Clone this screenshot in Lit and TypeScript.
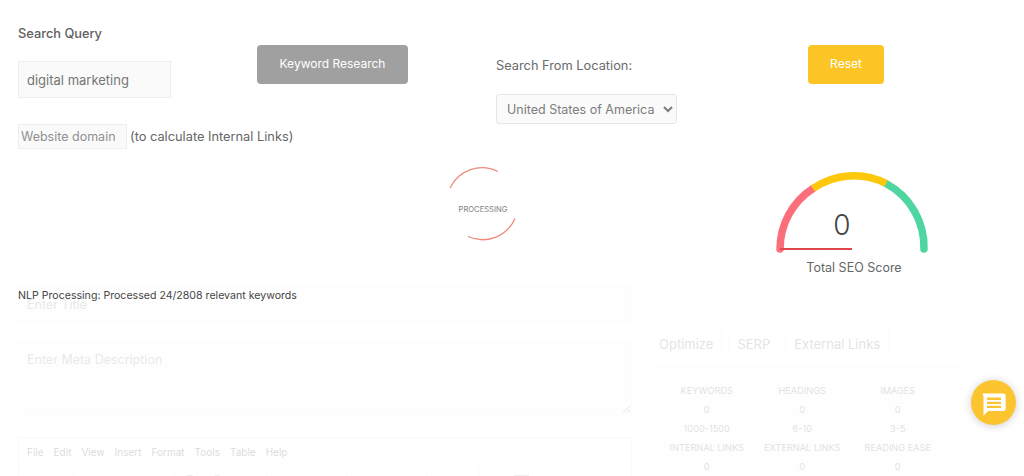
import { LitElement, html, css, svg } from 'lit';
import { customElement, property } from 'lit/decorators.js';

const MENU = ['File', 'Edit', 'View', 'Insert', 'Format', 'Tools', 'Table', 'Help'];

const STATS = [
  { label: 'KEYWORDS', value: '0', range: '1000-1500' },
  { label: 'HEADINGS', value: '0', range: '6-10' },
  { label: 'IMAGES', value: '0', range: '3-5' },
  { label: 'INTERNAL LINKS', value: '0', range: '' },
  { label: 'EXTERNAL LINKS', value: '0', range: '' },
  { label: 'READING EASE', value: '0', range: '' },
];

// only the top couple of pixels of the toolbar icons are on screen
const ICONS = {
  back: svg`<path d="M9 1L5 5" />`,
  forward: svg`<path d="M6 1l4 4" />`,
  bold: svg`<path d="M4 1h5a3 3 0 0 1 3 3" />`,
  italic: svg`<path d="M7 1h5" />`,
  underline: svg`<path d="M4 1v5M11 1v5" />`,
  lines: svg`<path d="M1 1.500h14M1 5.500h14" />`,
  list: svg`<path d="M5 1.500h10M1 1.500h2M5 5.500h10" />`,
  link: svg`<path d="M4 6a4 4 0 0 1 8 0" />`,
  image: svg`<path d="M1 6V1h14v5" />`,
  plus: svg`<path d="M8 1v6" />`,
};

const TOOL_GROUPS = [
  { cls: 'g-undo', icons: [ICONS.back, ICONS.forward] },
  { cls: 'g-format', icons: [] },
  { cls: 'g-text', icons: [ICONS.bold, ICONS.italic, ICONS.underline] },
  { cls: 'g-align', icons: [ICONS.lines, ICONS.lines, ICONS.lines] },
  { cls: 'g-list', icons: [ICONS.list, ICONS.list] },
  { cls: 'g-indent', icons: [ICONS.lines, ICONS.lines] },
  { cls: 'g-insert', icons: [ICONS.link, ICONS.image, ICONS.plus] },
];

@customElement('seo-gauge')
export class SeoGauge extends LitElement {
  @property({ type: Number }) score = 0;

  static styles = css`
    :host {
      display: block;
      width: 160px;
    }

    svg {
      display: block;
    }

    .caption {
      text-align: center;
      font-size: 12.500px;
      line-height: 16px;
      color: #666;
      padding-left: 4px;
    }
  `;

  render() {
    return html`
      <svg width="160" height="90" viewBox="0 0 160 90" fill="none">
        <path d="M8 79A72 72 0 0 1 41 18.500" stroke="#fb6f7a" stroke-width="7.500" stroke-linecap="round" />
        <path d="M114 13.500A72 72 0 0 1 152 79" stroke="#4fd6a0" stroke-width="7.500" stroke-linecap="round" />
        <path d="M41 18.500A72 72 0 0 1 114 13.500" stroke="#fdc70c" stroke-width="7.500" />
        <path d="M8 79H80" stroke="#e2474c" stroke-width="2" />
        <text x="70" y="65" text-anchor="middle" font-size="28" font-weight="300" fill="#444">${this.score}</text>
      </svg>
      <div class="caption">Total SEO Score</div>
    `;
  }
}

@customElement('app-root')
export class AppRoot extends LitElement {
  static styles = css`
    :host {
      display: block;
      position: relative;
      height: 476px;
      overflow: hidden;
      background: #fff;
      font-family: 'Inter', 'Noto Sans', sans-serif;
      color: #666;
    }

    .page {
      padding: 0 18px;
    }

    .top {
      display: grid;
      grid-template-columns: 239px 239px 312px auto;
      height: 160px;
    }

    .query-col {
      padding-top: 26px;
    }

    .button-col {
      padding-top: 45px;
    }

    .location-col {
      padding-top: 57px;
    }

    .field-label {
      font-size: 12.800px;
      line-height: 15px;
      font-weight: 500;
      color: #5e5e5e;
    }

    .location-label {
      font-size: 12.800px;
      line-height: 16px;
      padding-top: 1px;
      color: #6a6a6a;
    }

    input,
    select,
    textarea {
      box-sizing: border-box;
      font-family: inherit;
      outline: none;
    }

    .query-input {
      display: block;
      width: 153px;
      height: 37px;
      margin-top: 20px;
      padding: 0 8px;
      font-size: 13px;
      color: #757575;
      background: #fafafa;
      border: 1px solid #eee;
    }

    .domain-row {
      display: flex;
      align-items: center;
      gap: 3px;
      margin-top: 26px;
      font-size: 12.800px;
      white-space: nowrap;
      color: #666;
    }

    .domain-input {
      width: 109px;
      height: 25px;
      padding: 0 2px;
      font-size: 12.500px;
      background: #fafafa;
      border: 1px solid #eee;
    }

    .domain-input::placeholder {
      color: #8f8f8f;
    }

    .btn {
      display: block;
      height: 39px;
      padding: 0 0 2px;
      border: none;
      border-radius: 4px;
      font-family: inherit;
      font-size: 12px;
      color: #fff;
    }

    .btn-gray {
      width: 151px;
      background: #a0a0a0;
    }

    .btn-yellow {
      width: 76px;
      background: #fcc525;
    }

    .location-select {
      display: block;
      width: 181px;
      height: 30px;
      margin-top: 20px;
      padding: 0 6px;
      font-size: 12.500px;
      color: #7c7c7c;
      background: #fafafa;
      border: 1px solid #e6e6e6;
      border-radius: 3px;
    }

    .middle {
      display: grid;
      grid-template-columns: 614px 1fr;
      column-gap: 18px;
      height: 126px;
    }

    .spinner {
      position: relative;
      width: 80px;
      height: 80px;
      margin: 4px 0 0 425px;
    }

    .spinner span {
      position: absolute;
      left: 0;
      right: 0;
      top: 41px;
      text-align: center;
      font-size: 7.600px;
      line-height: 10px;
      color: #808080;
    }

    seo-gauge {
      margin: 10px 0 0 122px;
    }

    .lower {
      position: relative;
      display: grid;
      grid-template-columns: 614px 308px;
      column-gap: 18px;
    }

    .nlp-status {
      position: absolute;
      left: 0;
      top: 3px;
      font-size: 10.600px;
      line-height: 14px;
      color: #444;
    }

    .faded {
      opacity: 0.16;
    }

    .title-input {
      display: block;
      width: 100%;
      height: 36px;
      padding: 0 8px;
      font-size: 12.500px;
      background: #fcfcfc;
      border: 1px solid #eee;
    }

    .meta-input {
      display: block;
      width: 100%;
      height: 74px;
      margin-top: 19px;
      padding: 10px 8px;
      font-size: 12.500px;
      background: #fafafa;
      border: 1px solid #eee;
    }

    .editor {
      margin-top: 22px;
      height: 60px;
      border: 1px solid #e0e0e0;
      border-bottom: none;
    }

    .menu {
      display: flex;
      gap: 10px;
      padding: 7px 8px 0;
      font-size: 10px;
      line-height: 14px;
      color: #222;
    }

    .toolbar {
      display: flex;
      align-items: flex-start;
      height: 20px;
      margin-top: 7px;
      border-top: 1px solid #eee;
      color: #333;
    }

    .tool-group {
      box-sizing: border-box;
      display: flex;
      padding-top: 8px;
      height: 20px;
      border-right: 1px solid #e8e8e8;
    }

    .tool-group svg {
      display: block;
      flex: none;
      width: 15px;
      height: 12px;
      fill: none;
      stroke: currentColor;
      stroke-width: 1.500;
    }

    .g-undo {
      width: 55px;
      padding-left: 1.500px;
      gap: 17px;
    }

    .g-format {
      width: 101px;
    }

    .g-text {
      width: 92px;
      padding-left: 7.500px;
      gap: 10px;
    }

    .g-align {
      width: 80px;
      padding-left: 5.500px;
      gap: 10px;
    }

    .g-list {
      width: 80px;
      padding-left: 7.500px;
      gap: 21px;
    }

    .g-indent {
      width: 53px;
      padding-left: 7.500px;
      gap: 9px;
    }

    .g-insert {
      padding-left: 10.500px;
      gap: 8px;
      border-right: none;
    }

    .tabs {
      display: flex;
      gap: 6px;
      margin-top: 43px;
    }

    .tab {
      padding: 0 8px;
      font-size: 13px;
      line-height: 28px;
      color: #555;
      border: 1px solid #eee;
      border-bottom: none;
    }

    .stats {
      display: grid;
      grid-template-columns: repeat(3, 95.500px);
      margin: 8px 0 0 6px;
      padding: 14px 0 0 3px;
      border-top: 1px solid #e4e4e4;
      text-align: center;
      font-size: 9.200px;
      line-height: 19px;
      color: #444;
      background: #fcfcfc;
    }

    .stats-cell {
      display: grid;
      grid-auto-rows: 19px;
    }

    .chat {
      position: absolute;
      left: 971px;
      top: 380px;
      width: 45px;
      height: 45px;
      display: flex;
      align-items: center;
      justify-content: center;
      border-radius: 50%;
      background: #fcc52f;
      box-shadow: 0 1px 8px rgba(0, 0, 0, 0.2);
    }

    .chat svg {
      width: 28px;
      height: 28px;
      margin-top: 2px;
    }
  `;

  render() {
    return html`
      <div class="page">
        <section class="top">
          <div class="query-col">
            <div class="field-label">Search Query</div>
            <input class="query-input" .value=${'digital marketing'} />
            <div class="domain-row">
              <input class="domain-input" placeholder="Website domain" />
              <span>(to calculate Internal Links)</span>
            </div>
          </div>
          <div class="button-col">
            <button class="btn btn-gray">Keyword Research</button>
          </div>
          <div class="location-col">
            <div class="location-label">Search From Location:</div>
            <select class="location-select">
              <option>United States of America</option>
            </select>
          </div>
          <div class="button-col">
            <button class="btn btn-yellow">Reset</button>
          </div>
        </section>

        <section class="middle">
          <div class="spinner">
            <svg width="80" height="80" viewBox="0 0 80 80" fill="none" stroke="#ee8b78" stroke-width="1.300">
              <path d="M7 24A35.500 35.500 0 0 1 55 7.500" />
              <path d="M25 72.500A35.500 35.500 0 0 0 72 54.500" />
            </svg>
            <span>PROCESSING</span>
          </div>
          <seo-gauge .score=${0}></seo-gauge>
        </section>

        <section class="lower">
          <div class="faded">
            <input class="title-input" placeholder="Enter Title" />
            <textarea class="meta-input" placeholder="Enter Meta Description"></textarea>
            <div class="editor">
              <div class="menu">${MENU.map((item) => html`<span>${item}</span>`)}</div>
              <div class="toolbar">
                ${TOOL_GROUPS.map(
                  (group) => html`<div class="tool-group ${group.cls}">
                    ${group.icons.map((icon) => html`<svg viewBox="0 0 16 12">${icon}</svg>`)}
                  </div>`
                )}
              </div>
            </div>
          </div>
          <div class="faded">
            <div class="tabs">
              <div class="tab">Optimize</div>
              <div class="tab">SERP</div>
              <div class="tab">External Links</div>
            </div>
            <div class="stats">
              ${STATS.map(
                (s) => html`<div class="stats-cell">
                  <div>${s.label}</div>
                  <div>${s.value}</div>
                  <div>${s.range}</div>
                </div>`
              )}
            </div>
          </div>
          <div class="nlp-status">NLP Processing: Processed 24/2808 relevant keywords</div>
        </section>
      </div>

      <div class="chat">
        <svg viewBox="0 0 24 24">
          <path
            fill="#fff"
            fill-rule="evenodd"
            d="M4 3h16a2 2 0 0 1 2 2v11a2 2 0 0 1-2 2H7l-4 4V5a1 1 0 0 1 1-2zM6 6.500v2h12v-2zM6 10v2h12v-2zM6 13.500v2h12v-2z"
          />
        </svg>
      </div>
    `;
  }
}
